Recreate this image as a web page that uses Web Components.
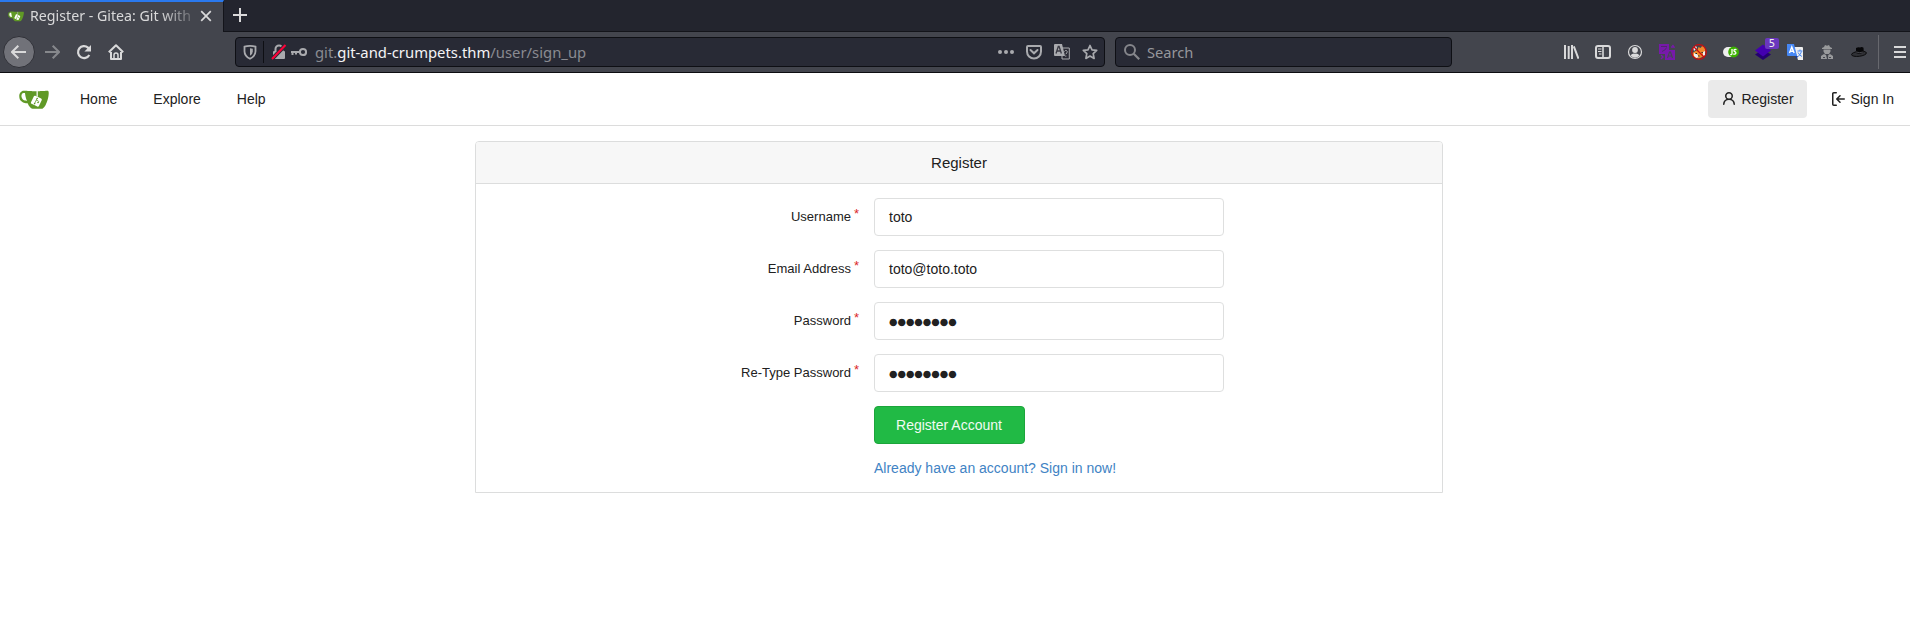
<!DOCTYPE html>
<html lang="en">
<head>
<meta charset="utf-8">
<title>Register - Gitea: Git with a cup of tea</title>
<style>
html,body{margin:0;height:100%;background:#fff;overflow:hidden}
body{font-family:"Liberation Sans",Arial,sans-serif;font-size:14px;color:#212121}
</style>
</head>
<body>
<browser-window>
  <browser-tab slot="tabs">Register - Gitea: Git with</browser-tab>
  <browser-toolbar slot="toolbar"></browser-toolbar>
  <site-nav></site-nav>
  <form-card heading="Register">
    <form-field label="Username">toto</form-field>
    <form-field label="Email Address">toto@toto.toto</form-field>
    <form-field label="Password" secret>●●●●●●●●</form-field>
    <form-field label="Re-Type Password" secret>●●●●●●●●</form-field>
    <submit-button>Register Account</submit-button>
    <text-link>Already have an account? Sign in now!</text-link>
  </form-card>
</browser-window>
<script>
const define = (name, html) => customElements.define(name, class extends HTMLElement {
  constructor() {
    super();
    const root = this.attachShadow({mode: 'open'});
    root.innerHTML = typeof html === 'function' ? html(this) : html;
  }
});

const ICONS = {
  cup: `<path fill="#609926" fill-rule="evenodd" d="M622.7,149.8c-4.1-4.1-9.6-4-9.6-4s-117.2,6.6-177.9,8c-13.3,0.3-26.5,0.6-39.6,0.7c0,39.1,0,78.2,0,117.2c-5.5-2.6-11.1-5.3-16.6-7.9c0-36.4-0.1-109.2-0.1-109.2c-29,0.4-89.2-2.2-89.2-2.2s-141.4-7.1-156.8-8.5c-9.8-0.6-22.5-2.1-39,1.5c-8.7,1.8-33.5,7.4-53.8,26.9C-4.9,212.4,6.6,276.2,8,285.8c1.7,11.7,6.9,44.2,31.7,72.5c45.8,56.1,144.4,54.8,144.4,54.8s12.1,28.9,30.6,55.5c25,33.1,50.7,58.9,75.7,62c63,0,188.9-0.1,188.9-0.1s12,0.1,28.3-10.3c14-8.5,26.5-23.4,26.5-23.4s12.9-13.8,30.9-45.3c5.5-9.7,10.1-19.1,14.1-28c0,0,55.2-117.1,55.2-231.1C633.2,157.9,624.7,151.8,622.7,149.8z"/><path class="hole" d="M125.6,353.9c-25.9-8.5-36.9-18.7-36.9-18.7S69.6,321.8,60,295.4c-16.5-44.2-1.4-71.2-1.4-71.2s8.4-22.5,38.5-30c13.8-3.7,31-3.1,31-3.1s7.1,59.4,15.7,94.2c7.2,29.2,24.8,77.7,24.8,77.7S142.5,359.9,125.6,353.9z"/><rect x="276" y="273" width="188" height="188" rx="26" fill="#fff" transform="rotate(25.7 370 367)"/><path d="M387 154v120" stroke="#fff" stroke-width="17"/><g fill="#609926"><circle cx="389" cy="308" r="17"/><circle cx="333" cy="418" r="17"/><circle cx="406" cy="394" r="17"/></g><path d="M385 308l-52 110M366 342l44 18q12 8 6 20l-10 20" stroke="#609926" stroke-width="16" fill="none"/>`,
  back: `<path d="M15 8H1.5M7.3 1.7 1 8l6.3 6.3" fill="none" stroke="currentColor" stroke-width="2"/>`,
  forward: `<path d="M1 8h13.5M8.7 1.7 15 8l-6.3 6.3" fill="none" stroke="currentColor" stroke-width="2"/>`,
  reload: `<path d="M13.3 11A6 6 0 1 1 12 3.6l2 2" fill="none" stroke="currentColor" stroke-width="2.2"/><path d="M15 1v6.6H8.4z" fill="currentColor"/>`,
  home: `<path d="M.8 8.3 8 1.2l7.200 7.100M3 8v7h10V8" fill="none" stroke="currentColor" stroke-width="2" stroke-linejoin="round"/><path d="M6 15v-4q0-2 2-2t2 2v4" fill="none" stroke="currentColor" stroke-width="1.500"/>`,
  shield: `<path d="M8 1.800c2 0 4 .3 5.500.8v4.600c0 3.600-2.300 6-5.500 7.600-3.200-1.600-5.500-4-5.500-7.600V2.600C4 2.100 6 1.800 8 1.800z" fill="none" stroke="currentColor" stroke-width="1.800"/><path d="M8 4.300q1.600 0 2.800.4v2.800q0 2.600-2.800 4.300z" fill="currentColor"/>`,
  lock: `<path d="M4.500 8V5a3.500 3.500 0 0 1 7 0v3" fill="none" stroke="currentColor" stroke-width="2"/><rect x="2" y="7" width="12" height="8" rx="1" fill="currentColor"/><path d="M1 15 14.500 1" stroke="#2a2a34" stroke-width="4"/><path d="M1 15 14.500 1" stroke="#ff0039" stroke-width="2"/>`,
  key: `<circle cx="12" cy="8" r="3.100" fill="none" stroke="currentColor" stroke-width="2"/><path d="M9 8H0M1.500 8v3M5 8v2.500" fill="none" stroke="currentColor" stroke-width="2"/>`,
  dots: `<g fill="currentColor"><circle cx="2" cy="8" r="2"/><circle cx="8" cy="8" r="2"/><circle cx="14" cy="8" r="2"/></g>`,
  pocket: `<path d="M2 2h12q1 0 1 1v4.500a7 7 0 0 1-14 0V3q0-1 1-1z" fill="none" stroke="currentColor" stroke-width="2"/><path d="m4.500 6 3.500 3.300L11.500 6" fill="none" stroke="currentColor" stroke-width="2" stroke-linecap="round"/>`,
  pageTranslate: `<path d="M8 4h7.300v11H8z" fill="#2a2a34" stroke="currentColor"/><path d="M0 1q0-1 1-1h7l3 12H1q-1 0-1-1z" fill="currentColor"/><path d="m2 9.500 2.300-7h.8l2.300 7M3 7h4" fill="none" stroke="#3a3a44" stroke-width="1.300"/><path d="M10.500 7.500q.8-1.500 2-1 1.300 1 .3 2.400l-1 1.300m0 1.300v1.200" fill="none" stroke="currentColor"/>`,
  star: `<path d="m8 1.500 2 4.300 4.700.6-3.500 3.200.9 4.800L8 12l-4.100 2.400.9-4.800L1.300 6.400 6 5.800z" fill="none" stroke="currentColor" stroke-width="1.700" stroke-linejoin="round"/>`,
  search: `<circle cx="6" cy="6" r="5" fill="none" stroke="currentColor" stroke-width="2"/><path d="m9.700 9.700 5.500 5.500" stroke="currentColor" stroke-width="2.200"/>`,
  library: `<path d="M2 1v14M5.700 2v13M9 1v14M10.800 2.300 15.500 14.700" fill="none" stroke="currentColor" stroke-width="2"/>`,
  sidebar: `<rect x="1" y="2" width="14" height="12" rx="2" fill="none" stroke="currentColor" stroke-width="2"/><path d="M8 2v12" stroke="currentColor" stroke-width="1.600"/><path d="M3 5h3.500M3 7.500h3.500M4 10h2.500" stroke="currentColor" stroke-width="1.100"/>`,
  account: `<circle cx="8" cy="8" r="6.500" fill="none" stroke="currentColor" stroke-width="1.200"/><circle cx="8" cy="6" r="2.900" fill="currentColor"/><path d="M3.600 11.200Q5.300 9.200 8 9.700q2.700-.5 4.400 1.500A5.200 5.200 0 0 1 3.600 11.200z" fill="currentColor"/>`,
  purple: `<path d="M0 0h10v6h6v10H6v-6H0z" fill="#7719aa"/><path d="M2 2.500h6M3 7.500q4-1.500 4.500-4" fill="none" stroke="#4b2a66" stroke-width=".9"/><path d="m8.500 14 2-6h1l2 6M9 12h4" fill="none" stroke="#454750" stroke-width="1.100"/><path d="M12 3h3l-1.500-2M2 11l2 2-2 2" fill="none" stroke="#7719aa" stroke-width="1.400"/>`,
  fox: `<path d="m1.500 9 3-2 2-1 1-3 2 1 2-2.500 2 1.500 1 4-1 5L8 14.500l-4-.5-2-2z" fill="#f08a2c"/><path d="m2 3 3-1 1 2-3 3zM3 9l3 1 2 3-3 1-2-2zM12 8l2-1v4l-2 1z" fill="#eee"/><path d="M4.500 9.500h1.500M10.500 8.500h1.300M7 12h1.500" stroke="#222"/><circle cx="8" cy="8" r="7.300" fill="none" stroke="#c80c10" stroke-width="1.300"/><path d="m3 3 10 10" stroke="#c80c10" stroke-width="1.200"/>`,
  js: `<rect y="3" width="15" height="10" rx="5" fill="#eee"/><circle cx="10.600" cy="8" r="5.400" fill="#3cb000"/><path d="M9 5v4.500q0 1.500-1.800 1M13.500 5.700q-3-.7-2.500 1 .2.700 1.300 1.200 1.200 1.200 0 2-1 .5-2 0" fill="none" stroke="#fff" stroke-width="1.300"/>`,
  layers: `<path d="m0 10.500 8-5 8 5-8 5.500z" fill="#240071"/><path d="m0 6.500 8-6 8 6-8 6z" fill="#4300b0"/>`,
  translate: `<path d="M7 3h8q1 0 1 1v12h-5z" fill="#eee"/><path d="M0 0h7l3 12H1q-1 0-1-1z" fill="#4687f4"/><path d="m2.500 9 2.300-6 2.300 6M3.300 7.200h3" fill="none" stroke="#fff" stroke-width="1.400"/><path d="M10.500 7h5M13 5.500V7M14.500 7.500q-1 3.500-3.500 5M11 8.500q1.500 3 4 4" fill="none" stroke="#4687f4"/><path d="M8 12h3L9.500 15z" fill="#183e9b"/>`,
  spy: `<path d="m5 3 1-2 2 .7L10 1l1 2 2 1v1H3V4zM4.500 5.500h7v2L10 10H6L4.500 7.500zM2 15v-3l3-2 2 1 1 4zm7 0 .3-4L11 10l3 2v3z" fill="#999a9c"/><path d="M4 13.500h2m4 0h2" stroke="#454750" stroke-width="1.100"/>`,
  hat: `<ellipse cx="8" cy="9.800" rx="7.500" ry="2.500" fill="#303136" stroke="#08080a" stroke-width=".9" transform="rotate(-7 8 10)"/><path d="M5 9V4q2-1.200 4-.6 2-1 3.500.4l.3 4.700q-4 2-7.800.5z" fill="#060608"/><path d="M5 8q3.500 1.300 7.500 0" stroke="#55565c" fill="none" stroke-width=".8"/>`,
  menu: `<path d="M0 3h12M0 8h12M0 13h12" stroke="currentColor" stroke-width="2"/>`,
  close: `<path d="m3.200 3.200 9.600 9.600m0-9.600-9.600 9.600" stroke="currentColor" stroke-width="1.700"/>`,
  plus: `<path d="M8 1v14M1 8h14" stroke="currentColor" stroke-width="2"/>`,
  person: `<path fill="currentColor" d="M10.500 5a2.500 2.500 0 11-5 0 2.500 2.500 0 015 0zm.061 3.073a4 4 0 10-5.123 0 6.004 6.004 0 00-3.431 5.142.75.75 0 001.498.07 4.500 4.500 0 018.990 0 .75.75 0 101.498-.07 6.005 6.005 0 00-3.432-5.142z"/>`,
  signin: `<path fill="currentColor" d="M2 2.750C2 1.784 2.784 1 3.750 1h2.500a.75.75 0 010 1.500h-2.500a.25.25 0 00-.25.25v10.500c0 .138.112.25.25.25h2.500a.75.75 0 010 1.500h-2.500A1.750 1.750 0 012 13.250V2.750zm6.560 4.500l1.970-1.970a.75.75 0 10-1.060-1.060L6.220 7.470a.75.75 0 000 1.060l3.250 3.250a.75.75 0 101.060-1.060L8.560 8.750h5.690a.75.75 0 000-1.500H8.560z"/>`
};

define('ui-icon', el => {
  const name = el.getAttribute('name'), size = el.getAttribute('size') || 16;
  const box = name === 'cup' ? '0 0 640 640' : name === 'menu' ? '0 0 12 16' : '0 0 16 16';
  return `<style>:host{display:block;flex:none;width:${name === 'menu' ? 12 : size}px;height:${size}px}
    svg{display:block;width:100%;height:100%}.hole{fill:var(--hole,#fff)}</style><svg viewBox="${box}">${ICONS[name]}</svg>`;
});

define('browser-window', `<style>
  :host{display:flex;flex-direction:column;height:100vh}
  .tabs{display:flex;box-sizing:border-box;height:32px;background:#23252e;box-shadow:inset 0 -1px #13141a;color:#d9d9da}
  .tabs ui-icon{margin:7px 0 0 8px}
  .page{flex:1}
  </style><div class="tabs"><slot name="tabs"></slot><ui-icon name="plus"></ui-icon></div>
  <slot name="toolbar"></slot><div class="page"><slot></slot></div>`);

define('browser-tab', `<style>
  :host{display:flex;box-sizing:border-box;width:224px;height:32px;border-top:2px solid #2a79ee;border-right:1px solid #13141a;
    background:#43454d;padding:0 9px 2px 8px;align-items:center;color:#d9d9da;font:14.2px/26px "Noto Sans",sans-serif;--hole:#fff}
  .t{width:167px;margin:0 2px 0 6px;overflow:hidden;white-space:nowrap;-webkit-mask-image:linear-gradient(90deg,#000 130px,transparent 172px)}
  ui-icon:last-child{margin-left:auto}
  </style><ui-icon name="cup"></ui-icon><div class="t"><slot></slot></div><ui-icon name="close"></ui-icon>`);

define('browser-toolbar', `<style>
  :host{display:flex;box-sizing:border-box;height:41px;background:#43454d;border-bottom:1px solid #0c0c10;align-items:center;
    padding:0 4px 0 3px;color:#d9d9da;font:14.84px/20px "Noto Sans",sans-serif}
  .back{display:grid;place-items:center;box-sizing:border-box;width:32px;height:32px;border-radius:50%;background:#717279;border:1px solid #303138}
  .nav{display:flex;align-items:center;gap:16px;margin-left:9px}
  .fwd{opacity:.45}
  .field{display:flex;align-items:center;box-sizing:border-box;height:30px;background:#282a35;border:1px solid #0e0f14;border-radius:4px;color:#a9aaae}
  .url{width:870px;margin-left:111px;padding:0 6px}
  .sep{width:1px;height:22px;background:#0e0f14;margin:0 7px 0 5px}
  .addr{margin-left:8px;flex:1;color:#8a8b91;white-space:pre}
  .addr b{font-weight:400;color:#f4f4f5}
  .acts{display:flex;gap:12px}
  .find{width:337px;margin-left:10px;padding-left:8px;color:#85868b}
  .find span{margin-left:7px;color:#96979c;font-size:14.67px}
  .ext{display:flex;gap:16px;margin-left:111px}
  .badged{position:relative}
  .badge{position:absolute;left:10px;top:-6px;width:14px;height:11px;border-radius:2px;background:#6a37be;color:#eee;font:10px/11px "DejaVu Sans",sans-serif;text-align:center}
  .bar{width:1px;height:34px;background:#67686e;margin:0 15px 0 11px}
  </style>
  <div class="back"><ui-icon name="back"></ui-icon></div>
  <div class="nav"><ui-icon class="fwd" name="forward"></ui-icon><ui-icon name="reload" style="margin-left:8px;margin-right:0"></ui-icon><ui-icon name="home"></ui-icon></div>
  <div class="field url"><ui-icon name="shield"></ui-icon><div class="sep"></div><ui-icon name="lock"></ui-icon>
    <ui-icon name="key" style="margin-left:4px"></ui-icon><div class="addr">git.<b>git-and-crumpets.thm</b>/user/sign_up</div>
    <div class="acts"><ui-icon name="dots"></ui-icon><ui-icon name="pocket"></ui-icon><ui-icon name="pageTranslate"></ui-icon><ui-icon name="star"></ui-icon></div></div>
  <div class="field find"><ui-icon name="search"></ui-icon><span>Search</span></div>
  <div class="ext"><ui-icon name="library"></ui-icon><ui-icon name="sidebar"></ui-icon><ui-icon name="account"></ui-icon><ui-icon name="purple"></ui-icon><ui-icon name="fox"></ui-icon><ui-icon name="js"></ui-icon><div class="badged"><ui-icon name="layers"></ui-icon><div class="badge">5</div></div><ui-icon name="translate"></ui-icon><ui-icon name="spy"></ui-icon><ui-icon name="hat"></ui-icon></div>
  <div class="bar"></div><ui-icon name="menu"></ui-icon>`.replace(' style="margin-left:8px;margin-right:0"', ''));

define('site-nav', `<style>
  :host{display:flex;box-sizing:border-box;height:53px;border-bottom:1px solid #dcdcdc;align-items:center;padding:0 16px 0 19px;line-height:20px}
  .links{display:flex;gap:36px;margin-left:31px;flex:1}
  .item{display:flex;align-items:center;gap:4px}
  .on{box-sizing:border-box;width:99px;height:38px;background:#eaeaea;border-radius:4px;padding-left:13px;margin-right:23px}
  </style><ui-icon name="cup" size="30"></ui-icon>
  <div class="links"><span>Home</span><span>Explore</span><span>Help</span></div>
  <div class="item on"><ui-icon name="person"></ui-icon><span>Register</span></div>
  <div class="item"><ui-icon name="signin"></ui-icon><span>Sign In</span></div>`);

define('form-card', el => `<style>
  :host{display:block;box-sizing:border-box;width:968px;margin:15px 0 0 475px;border:1px solid #dcdddd;border-radius:4px 4px 0 0;height:352px}
  h4{margin:0;height:41px;border-bottom:1px solid #dcdddd;background:#f7f7f7;border-radius:3px 3px 0 0;font:15px/41px "Liberation Sans",sans-serif;text-align:center}
  .body{display:flex;flex-direction:column;gap:14px;padding-top:14px}
  </style><h4>${el.getAttribute('heading')}</h4><div class="body"><slot></slot></div>`);

define('form-field', el => `<style>
  :host{display:flex;align-items:center;height:38px}
  .l{display:flex;justify-content:flex-end;width:383px;margin-right:15px;font-size:13px;line-height:18px}
  .l i{font-style:normal;color:#db2828;margin:-3px 0 0 3px}
  .v{box-sizing:border-box;width:350px;height:38px;border:1px solid #dedfdf;border-radius:4px;padding-left:14px;font-size:14px;line-height:36px}
  :host([secret]) .v{font:9.7px/37px "DejaVu Sans",sans-serif}
  </style><div class="l"><span>${el.getAttribute('label')}</span><i>*</i></div><div class="v"><slot></slot></div>`);

define('submit-button', `<style>
  :host{display:block;box-sizing:border-box;width:151px;height:38px;margin-left:398px;padding-right:1px;border:1px solid #1ca53b;border-radius:4px;background:#21ba45;color:#f1fbf3;text-align:center;line-height:36px}
  </style><slot></slot>`);

define('text-link', `<style>
  :host{display:block;margin-left:398px;color:#4183c4;line-height:20px}
  </style><slot></slot>`);
</script>
</body>
</html>
